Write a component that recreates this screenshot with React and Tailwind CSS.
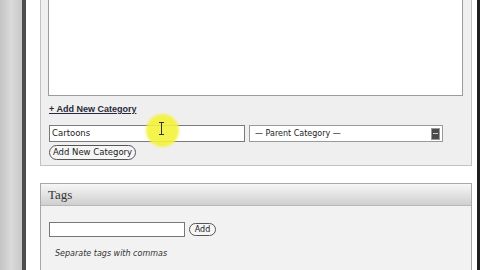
import React from 'react';

const sans = { fontFamily: '"DejaVu Sans", Verdana, sans-serif' };

export default function App() {
    return (
        <div className="relative w-[480px] h-[270px] overflow-hidden bg-white flex">
            {/* left window edge */}
            <div className="w-[22px] h-full bg-gradient-to-r from-[#c4c4c4] via-[#dadada] to-[#c8c8c8]" />
            <div className="w-[4px] h-full bg-[#4d4d4d]" />
            <div className="w-[14px] h-full bg-white" />

            <div className="w-[432px] h-full flex flex-col" style={sans}>
                {/* Categories box */}
                <div className="h-[166px] bg-[#efefef] border-x border-b border-[#c2c2c2] px-[7px] flex flex-col">
                    <div className="h-[96px] bg-white border-x border-b border-[#9c9c9c] mr-[1px]" />
                    <a className="mt-[9px] ml-[1px] text-[9px] font-bold underline text-[#2a2a3a] leading-none" style={{ fontFamily: '"Liberation Sans", Arial, sans-serif' }}>
                        + Add New Category
                    </a>
                    <div className="mt-[11px] flex items-center gap-[4px] ml-[1px]">
                        <div className="w-[196px] h-[17px] bg-white border border-[#7a7a7a] flex items-center pl-[2px] text-[8.5px] text-[#222]">
                            Cartoons
                        </div>
                        <div className="w-[194px] h-[17px] bg-white border border-[#9a9a9a] flex items-center justify-between pl-[5px] pr-[2px] text-[8px] text-[#222]">
                            <span>— Parent Category —</span>
                            <span className="w-[9px] h-[12px] bg-[#4a4a4a] border border-[#999] flex items-center justify-center">
                                <span className="w-[5px] h-[1px] bg-[#ccc]" />
                            </span>
                        </div>
                    </div>
                    <button className="mt-[3px] ml-[1px] w-[87px] h-[15px] rounded-full border border-[#555] bg-[#f6f6f6] text-[8.5px] text-[#222] leading-none">
                        Add New Category
                    </button>
                </div>

                <div className="h-[17px]" />

                {/* Tags box */}
                <div className="flex-1 border-x border-t border-[#a8a8a8] bg-[#f2f2f2] flex flex-col">
                    <div className="h-[22px] bg-gradient-to-b from-[#f7f7f7] to-[#cfcfcf] border-b border-[#b8b8b8] flex items-center pl-[7px] text-[13px] text-[#333]" style={{ fontFamily: '"Liberation Serif", "Times New Roman", serif' }}>
                        Tags
                    </div>
                    <div className="mt-[16px] ml-[8px] flex items-center gap-[4px]">
                        <div className="w-[136px] h-[15px] bg-white border border-[#777]" />
                        <button className="w-[27px] h-[13px] rounded-full border border-[#555] bg-[#f6f6f6] text-[8px] text-[#222] leading-none">
                            Add
                        </button>
                    </div>
                    <div className="mt-[11px] ml-[14px] text-[8px] italic text-[#333]">
                        Separate tags with commas
                    </div>
                </div>
            </div>

            <div className="w-[5px] h-full bg-white" />
            <div className="w-[3px] h-full bg-[#1e1e1e]" />

            {/* cursor highlight */}
            <div className="absolute left-[146px] top-[114px] w-[33px] h-[33px] rounded-full bg-[#f4f33c] opacity-90 blur-[1px]" />
            <div className="absolute left-[161px] top-[122px] w-[1px] h-[13px] bg-[#333]" />
            <div className="absolute left-[159px] top-[122px] w-[5px] h-[1px] bg-[#333]" />
            <div className="absolute left-[159px] top-[134px] w-[5px] h-[1px] bg-[#333]" />
        </div>
    );
}
